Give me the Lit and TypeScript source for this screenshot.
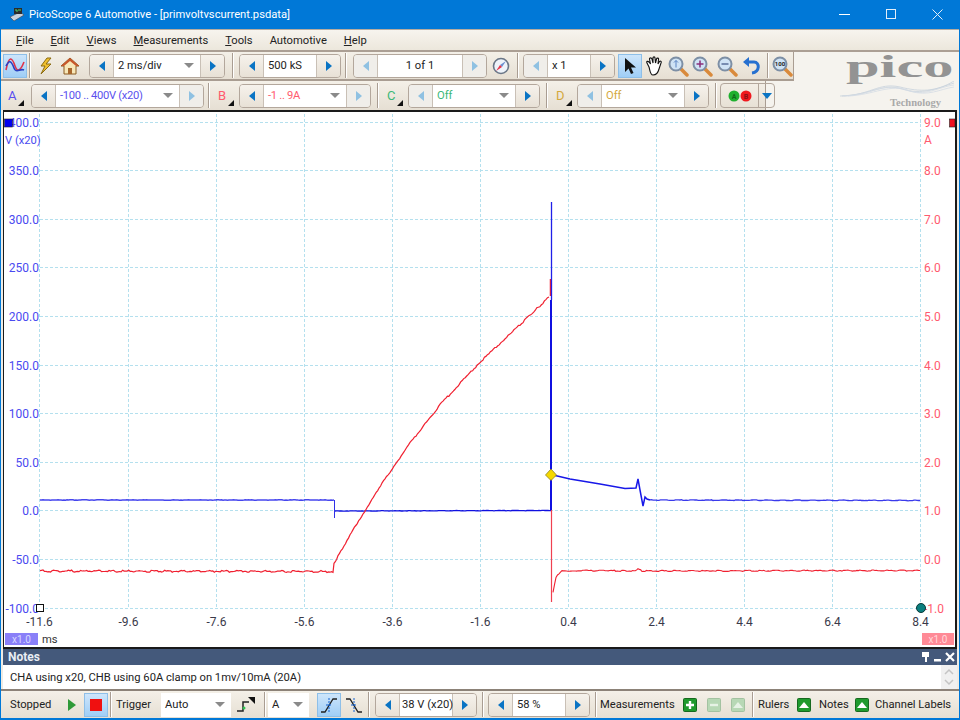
import { LitElement, html, css, svg } from 'lit';
import { customElement } from 'lit/decorators.js';

const LEFT_LABELS = ['400.0', '350.0', '300.0', '250.0', '200.0', '150.0', '100.0', '50.0', '0.0', '-50.0', '-100.0'];
const RIGHT_LABELS = ['9.0', '8.0', '7.0', '6.0', '5.0', '4.0', '3.0', '2.0', '1.0', '0.0', '-1.0'];
const TIME_LABELS = ['-11.6', '-9.6', '-7.6', '-5.6', '-3.6', '-1.6', '0.4', '2.4', '4.4', '6.4', '8.4'];
const gridX = [39.5, 128.5, 216.5, 304.5, 392.5, 480.5, 568.5, 656.5, 744.5, 832.5, 920.5];
const gridY = [122.5, 170.5, 219.5, 267.5, 316.5, 365.5, 413.5, 462.5, 510.5, 559.5, 608.5];

// small repeatable wobble so the traces don't look ruler straight
const noise = (i: number, amp: number) => (Math.sin(i * 12.9898) * 43758.5453 % 1) * amp;

function trace(points: number[][], amp: number) {
  const out: string[] = [];
  for (let p = 0; p < points.length - 1; p++) {
    const [x1, y1] = points[p];
    const [x2, y2] = points[p + 1];
    const steps = Math.max(1, Math.round((x2 - x1) / 1.5));
    for (let s = 0; s < steps; s++) {
      const t = s / steps;
      const x = x1 + (x2 - x1) * t;
      out.push(`${x.toFixed(1)},${(y1 + (y2 - y1) * t + noise(x, amp)).toFixed(1)}`);
    }
  }
  const last = points[points.length - 1];
  out.push(`${last[0]},${last[1]}`);
  return out.join(' ');
}

const redRise = trace([
  [40, 571], [333, 571.5], [334, 564], [338, 556], [350, 535], [366, 510], [385, 479], [410, 443],
  [440, 405], [480, 362], [520, 325], [549, 297],
], 1);
const redAfter = trace([[553, 592], [556, 577], [562, 571], [590, 570.5], [634, 571], [638, 569], [642, 571], [920, 570.5]], 0.6);
const blueFlat = trace([[40, 500], [334, 500]], 0.25);
const blueLow = trace([[335, 511], [551, 510.5]], 0.2);
const blueDecay = 'M553 475 L570 479 L600 484 L625 488.5 L636 488 L638 479 L640 490 L643 506 L645 497 L647 499 L650 500';
const blueTail = trace([[650, 500], [920, 500.5]], 0.35);

@customElement('app-root')
export class AppRoot extends LitElement {
  static styles = css`
    :host {
      display: block;
      width: 960px;
      height: 720px;
      box-sizing: border-box;
      background: #0078d7;
      font-family: Roboto, 'Liberation Sans', sans-serif;
      font-size: 11.2px;
      color: #222;
      overflow: hidden;
    }
    svg { display: block; }

    .title {
      height: 29px;
      display: flex;
      align-items: center;
      color: #fff;
      padding-left: 9px;
      gap: 4px;
    }
    .title-text { flex: 1; }
    .win { width: 42px; height: 29px; display: flex; align-items: center; justify-content: center; }
    .win.close { width: 45px; }

    .body { margin: 0 1px; background: #efebe3; height: 689px; }

    .menu {
      height: 21px;
      display: flex;
      align-items: center;
      background: linear-gradient(#f7f4ee, #ece7dc);
      border-top: 1px solid #b5aba0;
      box-sizing: border-box;
      padding-left: 15px;
      gap: 17px;
    }
    u { text-underline-offset: 1px; }

    .tools { display: flex; height: 60px; background: #f5f3ee; border-top: 2px solid #ab9f94; box-sizing: border-box; }
    .rows { width: 793px; }
    .row1 {
      height: 29px;
      width: 793px;
      display: flex;
      align-items: center;
      background: linear-gradient(#f4f0e8, #e6dfd3);
      border-bottom: 2px solid #a99d92;
      border-right: 1px solid #a99d92;
      box-sizing: border-box;
      padding-left: 2px;
    }
    .row2 {
      height: 29px;
      width: 765px;
      display: flex;
      align-items: center;
      background: linear-gradient(#f4f0e8, #e6dfd3);
      border-right: 1px solid #a99d92;
      box-sizing: border-box;
      padding-left: 2px;
    }
    .sep { width: 1px; height: 25px; background: #a99d92; border-right: 1px solid #fff; flex: none; }
    .icon { width: 24px; height: 24px; display: flex; align-items: center; justify-content: center; flex: none; }
    .icon.on { background: linear-gradient(#cfe6fb, #9dcdf6); box-shadow: inset 0 0 0 1px #8ebfe8; }

    .spin {
      display: flex;
      height: 24px;
      flex: none;
      border: 1px solid #b3a79c;
      border-radius: 4px;
      box-sizing: border-box;
      overflow: hidden;
    }
    .arrow {
      width: 23px;
      display: flex;
      align-items: center;
      justify-content: center;
      background: linear-gradient(#f6f2ec, #e8e1d6);
      flex: none;
    }
    .arrow.off { background: #f0eeea; }
    .field {
      background: #fff;
      display: flex;
      align-items: center;
      justify-content: space-between;
      padding: 0 4px;
      box-sizing: border-box;
      flex: none;
      white-space: nowrap;
      border-left: 1px solid #c9c0b6;
      border-right: 1px solid #c9c0b6;
    }
    .field.center { justify-content: center; }
    .field.tight { padding: 0 2px; }
    .field.rng { letter-spacing: -.3px; }
    .caret { width: 0; height: 0; border: 5px solid transparent; border-top: 5px solid #8a8a8a; border-bottom: 0; margin-right: 2px; }

    .w44 { width: 44px; } .w54 { width: 54px; } .w84 { width: 84px; }
    .w86 { width: 86px; } .w88 { width: 88px; } .w125 { width: 125px; }
    .ml1 { margin-left: 1px; } .ml2 { margin-left: 2px; } .ml3 { margin-left: 3px; } .ml4 { margin-left: 4px; }
    .ml5 { margin-left: 5px; } .ml6 { margin-left: 6px; } .ml7 { margin-left: 7px; } .ml8 { margin-left: 8px; }
    .ml10 { margin-left: 10px; }

    .chan { width: 23px; display: flex; position: relative; font-size: 13px; height: 24px; align-items: center; flex: none; padding-left: 2px; box-sizing: border-box; }
    .chan::after {
      content: '';
      position: absolute;
      right: 5px;
      bottom: 2px;
      border: 3px solid transparent;
      border-right-color: #111;
      border-bottom-color: #111;
    }
    .ca { color: #5a50ee; } .cb { color: #ff5a6e; } .cc { color: #3cb878; } .cd { color: #d4a83c; }

    .dots {
      display: flex;
      width: 55px;
      height: 25px;
      border: 1px solid #b3a79c;
      border-radius: 4px;
      box-sizing: border-box;
      flex: none;
      overflow: hidden;
    }
    .dots-main { width: 37px; display: flex; align-items: center; justify-content: center; border-right: 1px solid #b3a79c; }
    .dots-more { flex: 1; display: flex; align-items: center; justify-content: center; }

    .logo { flex: 1; position: relative; }
    .logo-pico {
      position: absolute;
      top: -1px;
      left: 52px;
      font: bold 31px/31px 'Liberation Serif', serif;
      color: #939393;
      transform: scaleX(1.95);
      transform-origin: left top;
    }
    .logo-wave { position: absolute; top: 29px; left: 46px; }
    .logo-tech {
      position: absolute;
      top: 45px;
      left: 96px;
      font: bold 10.5px/12px 'Liberation Serif', serif;
      color: #a9a9a9;
    }

    .scope { height: 539px; margin: 0 2px; background: #fff; border: solid #1a1a1a; border-width: 2px 2px 2px 1px; box-sizing: border-box; }
    .scope text { font-size: 12px; font-family: Roboto, 'Liberation Sans', sans-serif; }
    .scope text.tag { font-size: 10px; }
    .scope text.unit { font-size: 11.2px; }

    .notes-head {
      height: 16px;
      margin: 0 2px;
      background: #44597b;
      color: #e8edf4;
      font-size: 12px;
      font-weight: 700;
      display: flex;
      align-items: center;
      justify-content: space-between;
      padding: 0 1px 0 5px;
    }
    .notes-text {
      height: 24px;
      margin: 0 2px;
      background: #fff;
      display: flex;
      align-items: center;
      justify-content: space-between;
      padding-left: 7px;
      box-sizing: border-box;
    }
    .scroll { width: 16px; height: 24px; background: #f0f0f0; }

    .bottom {
      height: 29px;
      display: flex;
      align-items: center;
      background: linear-gradient(#f4f0e8, #e6dfd3);
      border-top: 2px solid #8c8278;
      box-sizing: border-box;
      padding-left: 9px;
      white-space: nowrap;
    }
    .plain { background: #fff; height: 24px; display: flex; align-items: center; justify-content: space-between; padding: 0 4px; box-sizing: border-box; flex: none; }
    .w70 { width: 70px; } .w41 { width: 41px; }
    .stopped { width: 57px; } .trigger { width: 45px; } .meas { width: 83px; } .rulers { width: 39px; } .notes-lbl { width: 36px; }
    .tiny { width: 14px; height: 14px; flex: none; }
  `;

  arrow(dir: 'l' | 'r', off = false) {
    const fill = off ? '#8fc1e2' : '#0a74c4';
    return html`<div class="arrow ${off ? 'off' : ''}">
      <svg width="8" height="12" viewBox="0 0 8 12">
        <path d=${dir === 'l' ? 'M7 1 V11 L1 6 Z' : 'M1 1 V11 L7 6 Z'} fill=${fill}></path>
      </svg>
    </div>`;
  }

  spin(width: string, label: string, cls = '', caret = false, ml = '', leftOff = false, rightOff = false) {
    return html`<div class="spin ${ml}">
      ${this.arrow('l', leftOff)}
      <div class="field ${width} ${cls}"><span>${label}</span>${caret ? html`<i class="caret"></i>` : ''}</div>
      ${this.arrow('r', rightOff)}
    </div>`;
  }

  lens(mark: unknown) {
    return html`<svg width="22" height="22" viewBox="0 0 22 22">
      <path d="M13 13 L20 20" stroke="#d98a3c" stroke-width="3.5" stroke-linecap="round"></path>
      <circle cx="9" cy="9" r="6.5" fill="#cfe3f5" stroke="#7d8fa5" stroke-width="2"></circle>
      ${mark}
    </svg>`;
  }

  greenBtn(kind: 'plus' | 'minus' | 'up', faded = false) {
    const bg = faded ? '#b7d8b5' : '#1f9a2d';
    const edge = faded ? '#a3c2a1' : '#17691f';
    const glyph = kind === 'plus'
      ? svg`<path d="M7 3 V11 M3 7 H11" stroke="#fff" stroke-width="2.4"></path>`
      : kind === 'minus'
        ? svg`<path d="M3 7 H11" stroke="#e6f2e5" stroke-width="2.4"></path>`
        : svg`<path d="M2 10 L7 4 L12 10 Z" fill=${faded ? '#e6f2e5' : '#fff'}></path>`;
    return html`<svg class="tiny" viewBox="0 0 14 14">
      <rect x=".5" y=".5" width="13" height="13" rx="1" fill=${bg} stroke=${edge}></rect>${glyph}
    </svg>`;
  }

  renderTitle() {
    return html`<div class="title">
      <svg width="16" height="16" viewBox="0 0 16 16">
        <path d="M1 10 L11 5 L15 8 L5 14 Z" fill="#c9d2dc" stroke="#39434f" stroke-width=".6"></path>
        <rect x="5" y="1" width="8" height="6" fill="#2b2b2b"></rect>
        <path d="M6 3 H8 V5 M9 3 H12" stroke="#4fd36a" fill="none"></path>
      </svg>
      <div class="title-text">PicoScope 6 Automotive - [primvoltvscurrent.psdata]</div>
      <div class="win"><svg width="11" height="11" viewBox="0 0 11 11"><path d="M0 5.5 H11" stroke="#fff"></path></svg></div>
      <div class="win"><svg width="11" height="11" viewBox="0 0 11 11"><rect x="1.5" y=".5" width="9" height="9" fill="none" stroke="#e4eef8"></rect></svg></div>
      <div class="win close"><svg width="11" height="11" viewBox="0 0 11 11"><path d="M.5 .5 L10.5 10.5 M10.5 .5 L.5 10.5" stroke="#e4eef8"></path></svg></div>
    </div>`;
  }

  renderMenu() {
    return html`<div class="menu">
      <span><u>F</u>ile</span><span><u>E</u>dit</span><span><u>V</u>iews</span>
      <span><u>M</u>easurements</span><span><u>T</u>ools</span><span>Automotive</span><span><u>H</u>elp</span>
    </div>`;
  }

  renderRow1() {
    return html`<div class="row1">
      <div class="icon on">
        <svg width="20" height="16" viewBox="0 0 20 16">
          <path d="M1 12 C4 -3 7 -1 10 8 C12 14 15 14 19 4" fill="none" stroke="#e0334a" stroke-width="1.6"></path>
          <path d="M1 8 C4 2 6 2 9 10 C11 16 15 10 19 12" fill="none" stroke="#2a3fc0" stroke-width="1.6"></path>
        </svg>
      </div>
      <div class="sep ml2"></div>
      <div class="icon ml2">
        <svg width="18" height="20" viewBox="0 0 18 20">
          <path d="M11 2 L5 10 H9 L5 18 L15 8 H10 L15 2 Z" fill="#f0c030" stroke="#8a6a10"></path>
        </svg>
      </div>
      <div class="icon ml1">
        <svg width="20" height="20" viewBox="0 0 20 20">
          <path d="M10 2 L1 10 H4 V18 H16 V10 H19 Z" fill="#f7e7b8" stroke="#8a5a20"></path>
          <path d="M10 2 L1 10 H4 L10 5 L16 10 H19 Z" fill="#c8562a"></path>
          <rect x="8" y="12" width="4" height="6" fill="#a8672c"></rect>
        </svg>
      </div>
      ${this.spin('w88', '2 ms/div', '', true, 'ml7')}
      <div class="sep ml7"></div>
      ${this.spin('w54', '500 kS', '', false, 'ml5')}
      <div class="sep ml4"></div>
      ${this.spin('w86', '1 of 1', 'center', false, 'ml6', true, true)}
      <div class="icon ml2">
        <svg width="20" height="20" viewBox="0 0 20 20">
          <circle cx="10" cy="10" r="7.5" fill="#eef3fa" stroke="#6a7687" stroke-width="1.6"></circle>
          <path d="M15 5 L9 9 L11 11 Z" fill="#6c8fd0"></path><path d="M5 15 L9 9 L11 11 Z" fill="#e8344a"></path>
        </svg>
      </div>
      <div class="sep ml4"></div>
      ${this.spin('w44', 'x 1', '', false, 'ml4', true, false)}
      <div class="icon on ml3">
        <svg width="14" height="18" viewBox="0 0 14 18"><path d="M2 1 V15 L5.5 11.5 L8 17 L10.5 16 L8 10.5 H13 Z" fill="#111"></path></svg>
      </div>
      <div class="icon">
        <svg width="20" height="20" viewBox="0 0 20 20">
          <path d="M5 11 L3 7 C2 5 4 5 5 6 L6.500 8 L5.500 3 C5.500 1.500 7.500 1.500 8 3 L9 7 L9 2 C9 .5 11 .5 11 2 L11.500 7 L12.500 3 C13 1.500 15 2 14.500 3.500 L14 8 L15.500 5.500 C16.500 4.500 18 5.500 17 7 L15 13 C14 17 12 19 9 19 C6 19 6 14 5 11 Z" fill="#fff" stroke="#111" stroke-width="1.100"></path>
        </svg>
      </div>
      <div class="icon">${this.lens(svg`<path d="M9 5.500 V12.500 M7 7.500 L9 5.500 L11 7.500" stroke="#5a84c4" fill="none"></path>`)}</div>
      <div class="icon">${this.lens(svg`<path d="M5.500 9 H12.500 M9 5.500 V12.500" stroke="#8a2f7a" stroke-width="1.500"></path>`)}</div>
      <div class="icon ml1">${this.lens(svg`<path d="M5.500 9 H12.500" stroke="#5a6f9a" stroke-width="1.500"></path>`)}</div>
      <div class="icon ml1">
        <svg width="20" height="20" viewBox="0 0 20 20">
          <path d="M5 6 H12 C18 6 18 16 10 17" fill="none" stroke="#2670d0" stroke-width="3"></path>
          <path d="M7 1 V11 L1 6 Z" fill="#2670d0"></path>
        </svg>
      </div>
      <div class="sep ml3"></div>
      <div class="icon ml1">${this.lens(svg`<text x="9" y="11" font-size="6" font-weight="700" text-anchor="middle" fill="#222">100</text>`)}</div>
    </div>`;
  }

  renderRow2() {
    return html`<div class="row2">
      <div class="chan ca ml3">A</div>
      ${this.spin('w125', '-100 .. 400V (x20)', 'ca rng', true, 'ml2', false, true)}
      <div class="sep ml4"></div>
      <div class="chan cb ml6">B</div>
      ${this.spin('w84', '-1 .. 9A', 'cb rng', true, '', false, true)}
      <div class="sep ml6"></div>
      <div class="chan cc ml6">C</div>
      ${this.spin('w84', 'Off', 'cc', true, '', true, false)}
      <div class="sep ml6"></div>
      <div class="chan cd ml6">D</div>
      ${this.spin('w84', 'Off', 'cd', true, '', true, false)}
      <div class="sep ml6"></div>
      <div class="dots ml3">
        <div class="dots-main">
          <svg width="24" height="12" viewBox="0 0 24 12">
            <circle cx="6" cy="6" r="5.500" fill="#1fb02f"></circle>
            <circle cx="18" cy="6" r="5.500" fill="#f0181e"></circle>
            <text x="6" y="8.500" font-size="7" font-weight="700" text-anchor="middle" fill="#0f6a1a">A</text>
            <text x="18" y="8.500" font-size="7" font-weight="700" text-anchor="middle" fill="#8a1016">B</text>
          </svg>
        </div>
        <div class="dots-more">
          <svg width="10" height="6" viewBox="0 0 10 6"><path d="M0 0 H10 L5 6 Z" fill="#0a74c4"></path></svg>
        </div>
      </div>
    </div>`;
  }

  renderLogo() {
    return html`<div class="logo">
      <div class="logo-pico">pico</div>
      <svg class="logo-wave" width="115" height="16" viewBox="0 0 115 16">
        <path d="M0 15 C30 15 38 1 60 6 C80 11 96 11 114 0" fill="none" stroke="#c8d2dc" stroke-width=".8"></path>
        <path d="M2 15 C34 13 42 2 62 8 C82 14 96 8 114 2" fill="none" stroke="#c8d2dc" stroke-width=".8"></path>
        <path d="M4 15 C28 15 46 0 66 9 C86 16 98 6 114 4" fill="none" stroke="#d4dce4" stroke-width=".8"></path>
        <path d="M8 15 C34 14 50 2 70 10 C88 16 100 8 114 6" fill="none" stroke="#d4dce4" stroke-width=".8"></path>
      </svg>
      <div class="logo-tech">Technology</div>
    </div>`;
  }

  renderPlot() {
    return html`<svg width="951" height="535" viewBox="4 112 951 535">
      <g stroke="#b4e0ee" stroke-width="1" stroke-dasharray="3 2">
        ${gridX.map((x) => svg`<line x1=${x} x2=${x} y1="114" y2="608"></line>`)}
        ${gridY.map((y) => svg`<line x1="40" x2="921" y1=${y} y2=${y}></line>`)}
      </g>
      <g fill="#4a4af0" text-anchor="end">
        ${LEFT_LABELS.map((t, i) => svg`<text x="39" y=${gridY[i] + 4}>${t}</text>`)}
      </g>
      <text class="unit" x="5" y="144" fill="#4a4af0">V (x20)</text>
      <g fill="#ff5a6e">
        ${RIGHT_LABELS.map((t, i) => svg`<text x="924" y=${gridY[i] + 4}>${t}</text>`)}
        <text x="924" y="144">A</text>
      </g>
      <g fill="#3a3a4a" text-anchor="middle">
        ${TIME_LABELS.map((t, i) => svg`<text x=${gridX[i]} y="626">${t}</text>`)}
      </g>

      <polyline points=${blueFlat} fill="none" stroke="#1818e8" stroke-width="1.500" opacity=".8"></polyline>
      <path d="M334.500 500 V518" stroke="#3030e8" fill="none"></path>
      <polyline points=${blueLow} fill="none" stroke="#1010e0" stroke-width="1.300"></polyline>
      <polyline points=${redRise} fill="none" stroke="#f02030" stroke-width="1.200"></polyline>
      <path d="M550.500 279 V296" stroke="#f02030" stroke-width="1.500"></path>
      <path d="M551.500 510 V602" stroke="#f04050" stroke-width="1.200"></path>
      <polyline points=${redAfter} fill="none" stroke="#f02030" stroke-width="1.100"></polyline>
      <path d="M551.500 202 V300" stroke="#2020e8" stroke-width="1.300"></path>
      <path d="M551 300 V510" stroke="#1010e0" stroke-width="2"></path>
      <path d=${blueDecay} fill="none" stroke="#1818e8" stroke-width="1.500"></path>
      <polyline points=${blueTail} fill="none" stroke="#1818e8" stroke-width="1.300" opacity=".85"></polyline>
      <path d="M551 469 L556.500 475 L551 480.500 L545.500 475 Z" fill="#f5d800" stroke="#8a8020" stroke-width=".8"></path>

      <rect x="4.500" y="119" width="8" height="8" fill="#0000f0" stroke="#222" stroke-width=".6"></rect>
      <rect x="949.500" y="119" width="5.500" height="8" fill="#f01020" stroke="#222" stroke-width=".6"></rect>
      <rect x="36.500" y="604.500" width="7" height="7" fill="#fff" stroke="#111"></rect>
      <circle cx="921" cy="608" r="4.500" fill="#0b7f7f" stroke="#063a3a"></circle>

      <rect x="5" y="633" width="33" height="12" fill="#8a80f8"></rect>
      <text class="tag" x="21.500" y="643" text-anchor="middle" fill="#d8d8ff">x1.0</text>
      <text class="unit" x="42" y="643" fill="#333">ms</text>
      <rect x="922" y="633" width="32" height="12" fill="#ff8a96"></rect>
      <text class="tag" x="938" y="643" text-anchor="middle" fill="#ffd8dc">x1.0</text>
    </svg>`;
  }

  renderNotes() {
    return html`<div class="notes-head">
      <span>Notes</span>
      <svg width="36" height="12" viewBox="0 0 36 12">
        <path d="M2 1 H9 V6 H7 V11 H5 V6 H2 Z" fill="#fff"></path>
        <rect x="14" y="8" width="7" height="2.500" fill="#fff"></rect>
        <path d="M26 2 L34 10 M34 2 L26 10" stroke="#fff" stroke-width="2.200"></path>
      </svg>
    </div>
    <div class="notes-text">
      <span>CHA using x20, CHB using 60A clamp on 1mv/10mA (20A)</span>
      <svg class="scroll" viewBox="0 0 16 24">
        <path d="M4 9 L8 5 L12 9 M4 15 L8 19 L12 15" fill="none" stroke="#c4c4c4" stroke-width="1.500"></path>
      </svg>
    </div>`;
  }

  renderBottom() {
    return html`<div class="bottom">
      <div class="stopped">Stopped</div>
      <svg width="10" height="14" viewBox="0 0 10 14"><path d="M1 1 V13 L9 7 Z" fill="#2f9a38"></path></svg>
      <div class="icon on ml7"><svg width="12" height="12"><rect width="12" height="12" fill="#f01010"></rect></svg></div>
      <div class="sep ml2"></div>
      <div class="trigger ml4">Trigger</div>
      <div class="plain w70"><span>Auto</span><i class="caret"></i></div>
      <div class="icon ml3">
        <svg width="20" height="18" viewBox="0 0 20 18">
          <path d="M1 15 H7 V6 H13" fill="none" stroke="#222" stroke-width="1.500"></path>
          <path d="M12 1 H19 V8 Z" fill="#111"></path><circle cx="8" cy="12" r="1.500" fill="#30c050"></circle>
        </svg>
      </div>
      <div class="sep ml6"></div>
      <div class="plain w41 ml2"><span>A</span><i class="caret"></i></div>
      <div class="icon on ml8">
        <svg width="18" height="18" viewBox="0 0 18 18"><path d="M1 16 H5 L13 3 H17" fill="none" stroke="#222" stroke-width="1.300"></path><path d="M9 2 V16 M6 9 H12" stroke="#1060d0" stroke-dasharray="2 1"></path></svg>
      </div>
      <div class="icon ml1">
        <svg width="18" height="18" viewBox="0 0 18 18"><path d="M1 3 H5 L13 16 H17" fill="none" stroke="#222" stroke-width="1.300"></path><path d="M9 2 V16 M6 9 H12" stroke="#1060d0" stroke-dasharray="2 1"></path></svg>
      </div>
      <div class="sep ml2"></div>
      ${this.spin('w54', '38 V (x20)', 'tight', false, 'ml5')}
      <div class="sep ml5"></div>
      ${this.spin('w54', '58 %', '', false, 'ml4')}
      <div class="sep ml5"></div>
      <div class="meas ml3">Measurements</div>
      ${this.greenBtn('plus')}
      <div class="ml10">${this.greenBtn('minus', true)}</div>
      <div class="ml10">${this.greenBtn('up', true)}</div>
      <div class="sep ml7"></div>
      <div class="rulers ml4">Rulers</div>
      ${this.greenBtn('up')}
      <div class="notes-lbl ml8">Notes</div>
      ${this.greenBtn('up')}
      <div class="ml6">Channel Labels</div>
    </div>`;
  }

  render() {
    return html`
      ${this.renderTitle()}
      <div class="body">
        ${this.renderMenu()}
        <div class="tools">
          <div class="rows">${this.renderRow1()}${this.renderRow2()}</div>
          ${this.renderLogo()}
        </div>
        <div class="scope">${this.renderPlot()}</div>
        ${this.renderNotes()}
        ${this.renderBottom()}
      </div>
    `;
  }
}
